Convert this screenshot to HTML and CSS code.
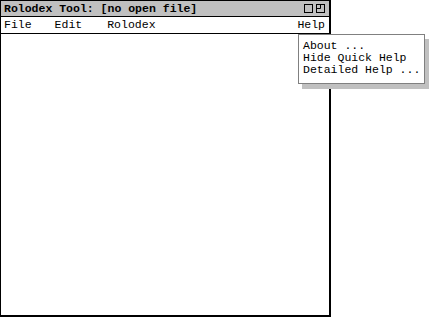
FILE: index.html
```html
<!DOCTYPE html>
<html lang="en">
<head>
  <meta charset="UTF-8">
  <title>Rolodex Tool</title>
  <link rel="stylesheet" href="styles.css">
</head>
<body>
  <div class="window">
    <div class="title-bar">
      <span class="title">Rolodex Tool: [no open file]</span>
      <span class="title-icons">
        <svg width="9" height="9" viewBox="0 0 9 9"><rect x="0.5" y="0.5" width="8" height="8" fill="none" stroke="#000"/></svg>
        <svg width="9" height="9" viewBox="0 0 9 9"><rect x="0.5" y="0.5" width="8" height="8" fill="none" stroke="#000"/><path d="M0.5 4.5 H4.5 V0.5" fill="none" stroke="#000"/></svg>
      </span>
    </div>
    <div class="menu-bar">
      <span class="menu-item file">File</span>
      <span class="menu-item edit">Edit</span>
      <span class="menu-item">Rolodex</span>
      <span class="menu-item help">Help</span>
    </div>
    <div class="content"></div>
  </div>

  <!-- Help menu dropdown -->
  <div class="dropdown">
    <div class="dropdown-item">About ...</div>
    <div class="dropdown-item">Hide Quick Help</div>
    <div class="dropdown-item">Detailed Help ...</div>
  </div>
</body>
</html>
```

FILE: styles.css
```css
body {
  margin: 0;
  background: #fff;
  font-family: "Liberation Mono", "DejaVu Sans Mono", monospace;
  font-size: 11.5px;
  color: #000;
}

.window {
  width: 328px;
  height: 314px;
  border-top: 1px solid #000;
  border-left: 1px solid #000;
  border-right: 2px solid #000;
  border-bottom: 2px solid #000;
  display: flex;
  flex-direction: column;
}

.title-bar {
  height: 15px;
  background: #c0c0c0;
  border-bottom: 1px solid #000;
  display: flex;
  align-items: center;
  justify-content: space-between;
  padding: 0 4px 0 3px;
}

.title {
  font-weight: bold;
  line-height: 15px;
}

.title-icons {
  display: flex;
  gap: 3px;
}

.title-icons svg {
  display: block;
}

.menu-bar {
  height: 16px;
  border-bottom: 1px solid #000;
  display: flex;
  align-items: center;
  padding: 0 4px 0 3px;
  line-height: 16px;
}

.menu-item.file {
  margin-right: 23px;
}

.menu-item.edit {
  margin-right: 25px;
}

.menu-item.help {
  margin-left: auto;
}

.content {
  flex: 1;
}

/* Help menu popup */
.dropdown {
  position: absolute;
  top: 34px;
  left: 298px;
  width: 117px;
  padding: 5px 4px 7px 4px;
  background: #fff;
  border: 1px solid #808080;
  box-shadow: 4px 5px 0 #c0c0c0;
  line-height: 12px;
}

.dropdown-item {
  white-space: nowrap;
}
```
